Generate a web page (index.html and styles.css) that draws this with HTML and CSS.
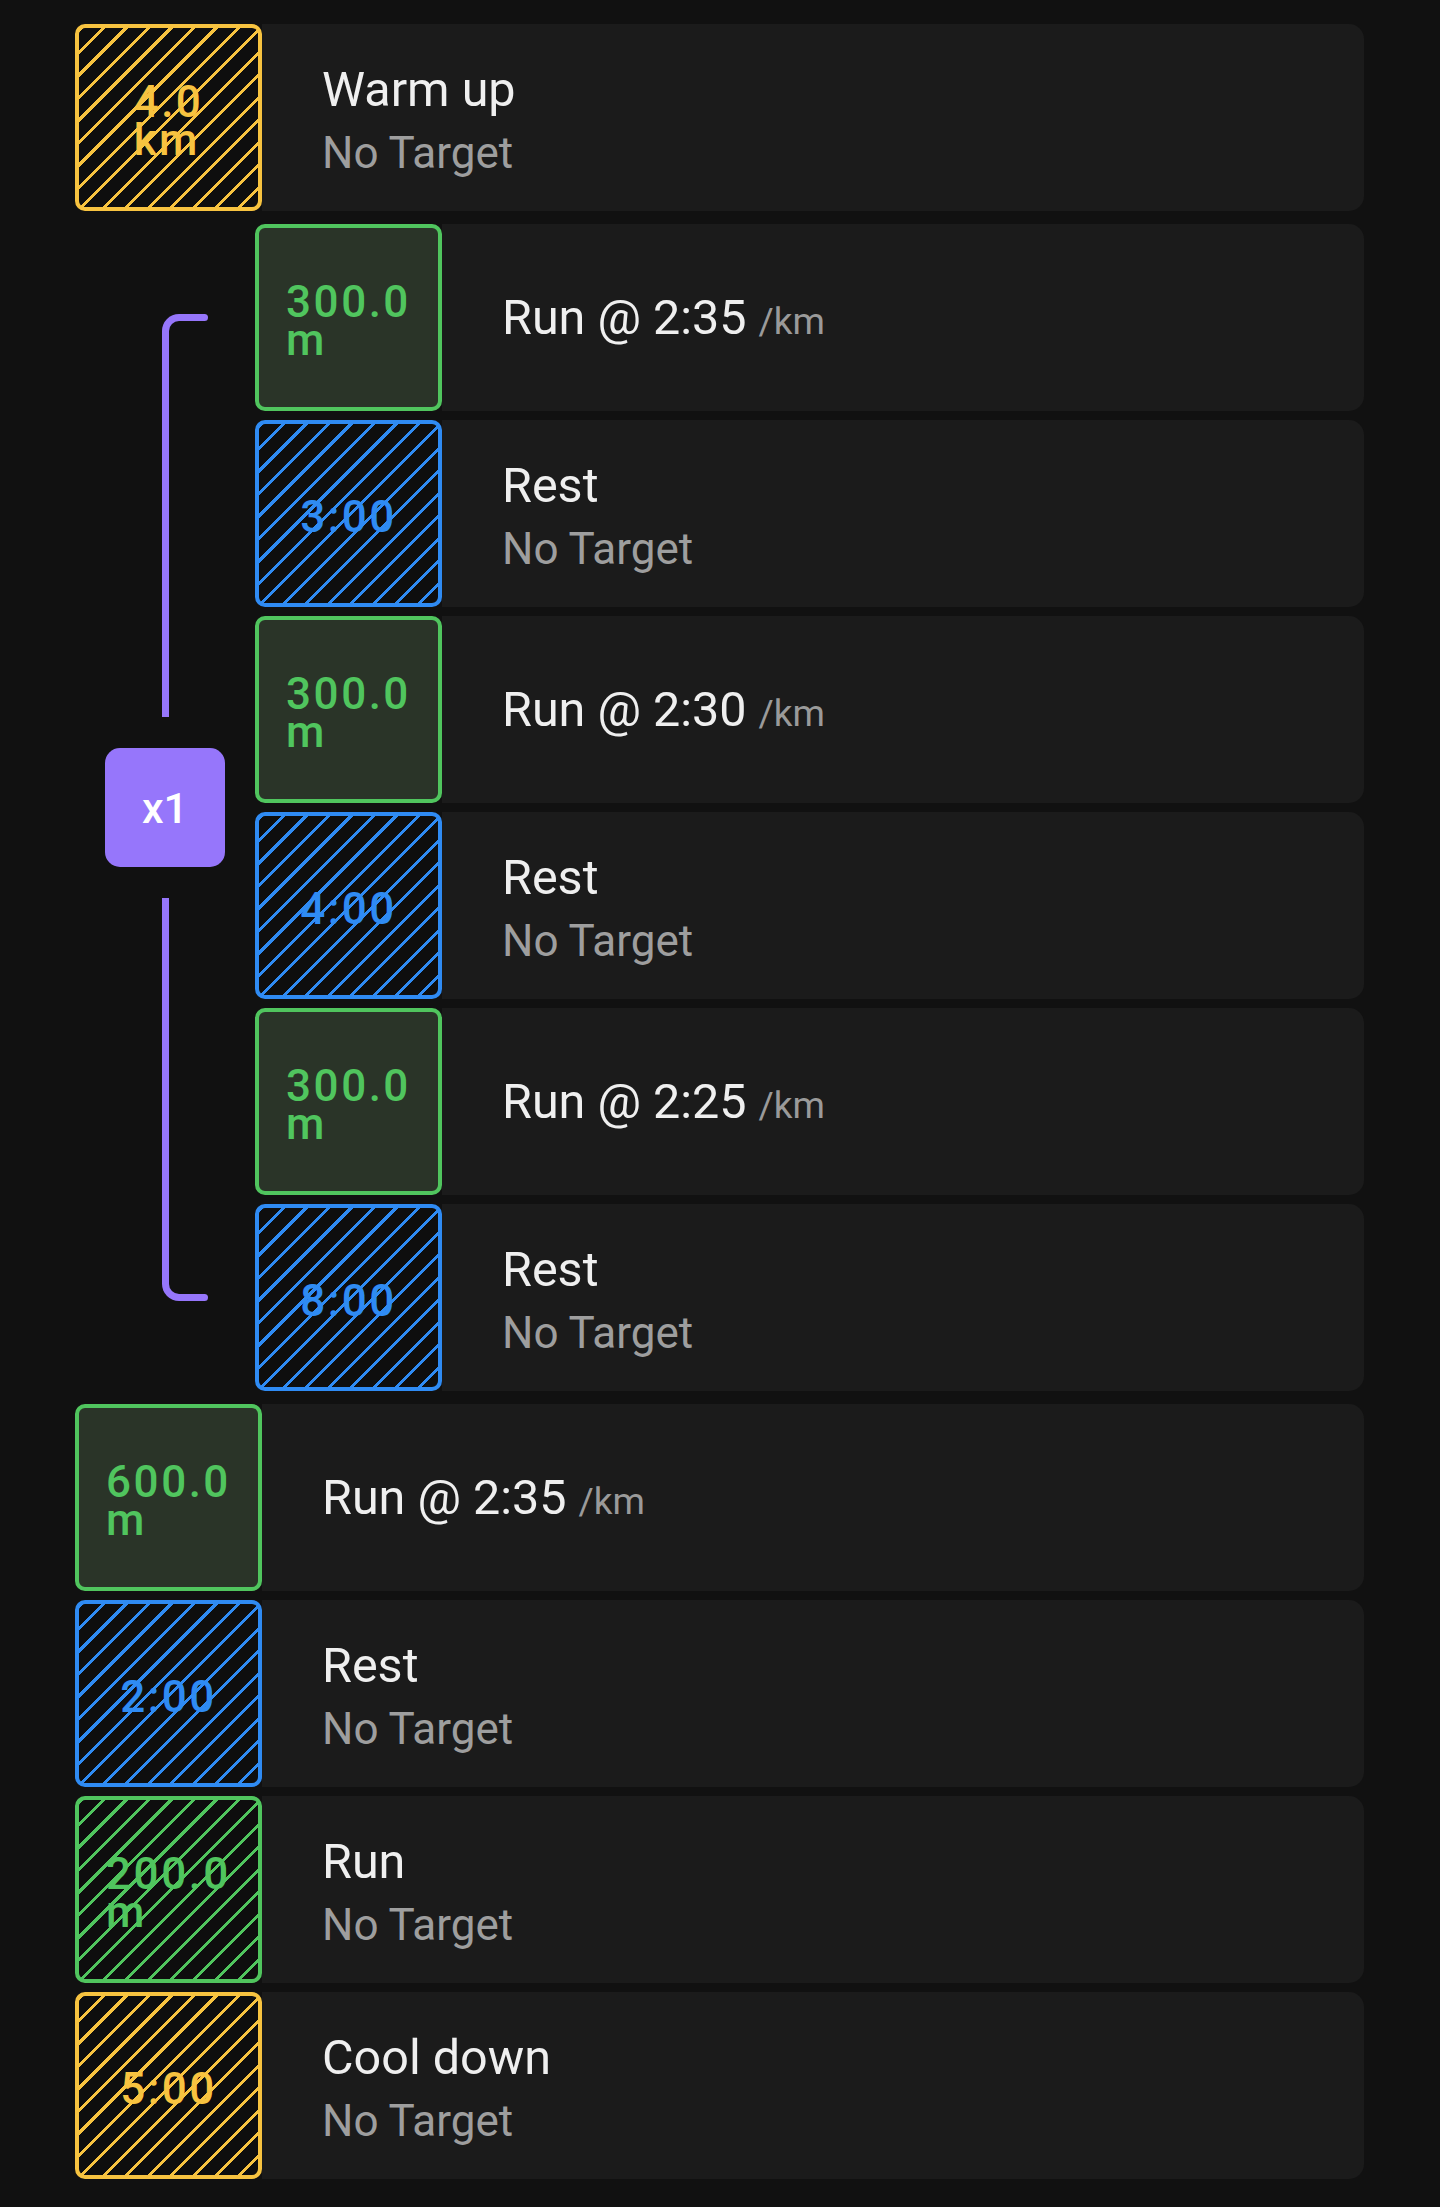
FILE: index.html
```html
<!DOCTYPE html>
<html lang="en">
<head>
<meta charset="utf-8">
<title>Workout steps</title>
<link rel="stylesheet" href="styles.css">
</head>
<body>
<main class="workout">
  <div class="step">
    <div class="tile tile--warm hatched"><span class="tile-val">4.0 km</span></div>
    <div class="step-body">
      <div class="step-title">Warm up</div>
      <div class="step-sub">No Target</div>
    </div>
  </div>

  <section class="repeat">
    <div class="repeat-bracket">
      <div class="arm arm--top"></div>
      <div class="repeat-badge">x1</div>
      <div class="arm arm--bottom"></div>
    </div>
    <div class="repeat-steps">
      <div class="step">
        <div class="tile tile--run"><span class="tile-val">300.0 m</span></div>
        <div class="step-body">
          <div class="step-title">Run @ 2:35 <span class="unit">/km</span></div>
        </div>
      </div>
      <div class="step">
        <div class="tile tile--rest hatched"><span class="tile-val">3:00</span></div>
        <div class="step-body">
          <div class="step-title">Rest</div>
          <div class="step-sub">No Target</div>
        </div>
      </div>
      <div class="step">
        <div class="tile tile--run"><span class="tile-val">300.0 m</span></div>
        <div class="step-body">
          <div class="step-title">Run @ 2:30 <span class="unit">/km</span></div>
        </div>
      </div>
      <div class="step">
        <div class="tile tile--rest hatched"><span class="tile-val">4:00</span></div>
        <div class="step-body">
          <div class="step-title">Rest</div>
          <div class="step-sub">No Target</div>
        </div>
      </div>
      <div class="step">
        <div class="tile tile--run"><span class="tile-val">300.0 m</span></div>
        <div class="step-body">
          <div class="step-title">Run @ 2:25 <span class="unit">/km</span></div>
        </div>
      </div>
      <div class="step">
        <div class="tile tile--rest hatched"><span class="tile-val">8:00</span></div>
        <div class="step-body">
          <div class="step-title">Rest</div>
          <div class="step-sub">No Target</div>
        </div>
      </div>
    </div>
  </section>

  <div class="step">
    <div class="tile tile--run"><span class="tile-val">600.0 m</span></div>
    <div class="step-body">
      <div class="step-title">Run @ 2:35 <span class="unit">/km</span></div>
    </div>
  </div>
  <div class="step">
    <div class="tile tile--rest hatched"><span class="tile-val">2:00</span></div>
    <div class="step-body">
      <div class="step-title">Rest</div>
      <div class="step-sub">No Target</div>
    </div>
  </div>
  <div class="step">
    <div class="tile tile--run-open hatched"><span class="tile-val">200.0 m</span></div>
    <div class="step-body">
      <div class="step-title">Run</div>
      <div class="step-sub">No Target</div>
    </div>
  </div>
  <div class="step">
    <div class="tile tile--warm hatched"><span class="tile-val">5:00</span></div>
    <div class="step-body">
      <div class="step-title">Cool down</div>
      <div class="step-sub">No Target</div>
    </div>
  </div>
</main>
</body>
</html>
```
FILE: styles.css
```css
html, body {
  margin: 0;
  background: #111111;
}

body {
  font-family: Roboto, "Liberation Sans", sans-serif;
  color: #efefef;
}

.workout {
  display: flex;
  flex-direction: column;
  gap: 9px;
  padding: 24px 76px 28px 75px;
}

.step {
  display: flex;
  height: 187px;
}

.tile {
  --c: #50c55e;
  flex: none;
  width: 187px;
  height: 187px;
  box-sizing: border-box;
  border: 4px solid var(--c);
  border-radius: 10px;
  color: var(--c);
  display: flex;
  align-items: center;
  justify-content: center;
  padding-top: 7px;
}

.hatched {
  background:
    repeating-linear-gradient(135deg, var(--c) 0 2.9px, transparent 2.9px 15.9px),
    #0e0e0e;
}

.tile--warm { --c: #f7c340; }
.tile--rest { --c: #2f8bf3; }
.tile--run-open { --c: #50c55e; }
.tile--run {
  --c: #50c55e;
  background: #2a3428;
}

.tile-val {
  width: min-content;
  font-size: 44px;
  font-weight: 500;
  line-height: 38px;
  letter-spacing: 2.5px;
}

.step-body {
  flex: 1;
  background: #1b1b1b;
  border-radius: 0 15px 15px 0;
  display: flex;
  flex-direction: column;
  justify-content: center;
  padding: 5px 0 0 60px;
}

.step-title {
  font-size: 48.5px;
  line-height: 56px;
  color: #efefef;
}

.unit {
  font-size: 37px;
  color: #9a9a9a;
}

.step-sub {
  font-size: 44px;
  line-height: 49px;
  margin-top: 11px;
  color: #9e9e9e;
}

.repeat {
  display: flex;
  margin: 4px 0;
}

.repeat-bracket {
  flex: none;
  width: 180px;
  box-sizing: border-box;
  padding: 90px 0;
  display: flex;
  flex-direction: column;
  gap: 31px;
}

.arm {
  --p: #9676fb;
  position: relative;
  flex: 1;
  align-self: flex-start;
  margin-left: 86.5px;
  width: 43px;
  box-sizing: border-box;
  border-left: 7px solid var(--p);
}

.arm--top {
  border-top: 7px solid var(--p);
  border-top-left-radius: 17px;
}

.arm--bottom {
  border-bottom: 7px solid var(--p);
  border-bottom-left-radius: 17px;
}

.arm::after {
  content: "";
  position: absolute;
  right: -3.5px;
  width: 7px;
  height: 7px;
  border-radius: 50%;
  background: var(--p);
}

.arm--top::after { top: -7px; }
.arm--bottom::after { bottom: -7px; }

.repeat-badge {
  flex: none;
  align-self: center;
  width: 120px;
  height: 119px;
  border-radius: 15px;
  background: #9676fb;
  color: #ffffff;
  font-size: 43px;
  font-weight: 500;
  display: flex;
  align-items: center;
  justify-content: center;
}

.repeat-steps {
  flex: 1;
  display: flex;
  flex-direction: column;
  gap: 9px;
}
```
